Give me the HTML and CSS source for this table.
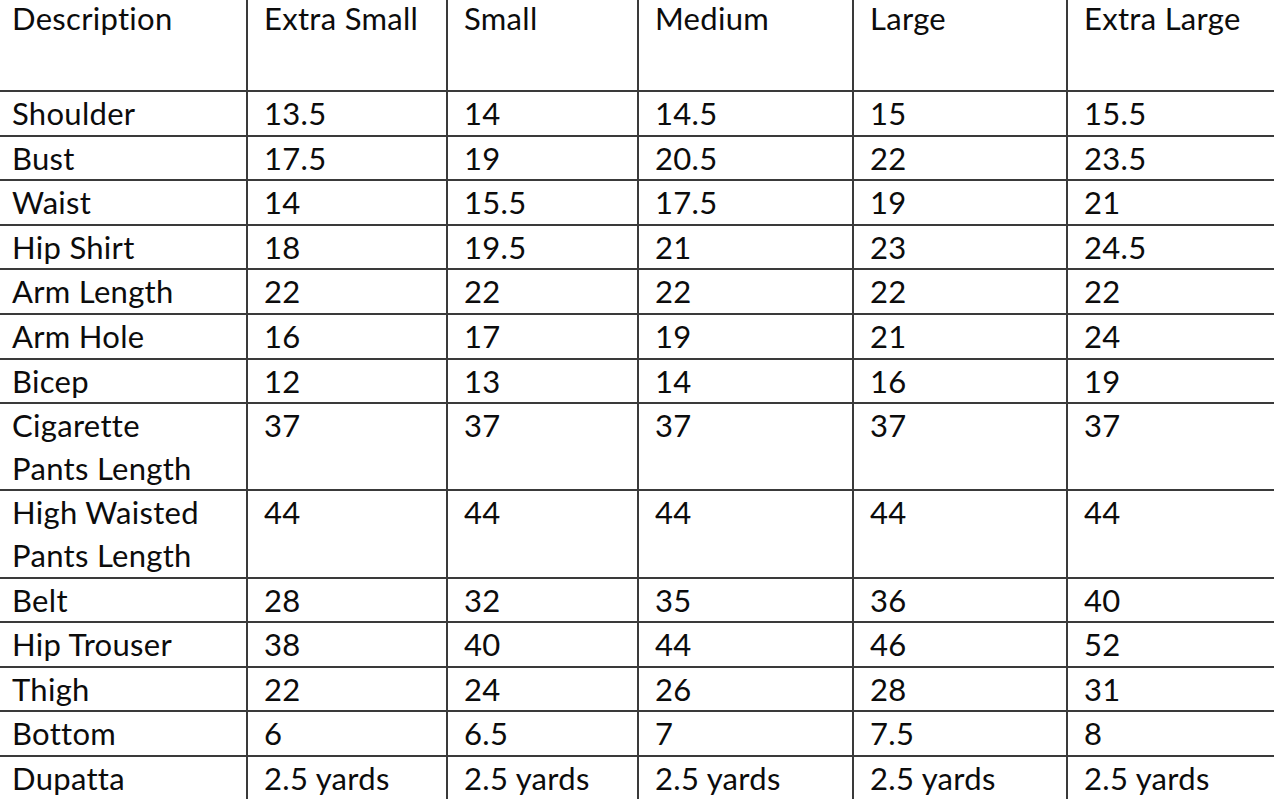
FILE: index.html
```html
<!DOCTYPE html>
<html>
<head>
<meta charset="utf-8">
<link rel="stylesheet" href="styles.css">
</head>
<body>
<table class="size-table">
  <colgroup>
    <col class="c1"><col class="c2"><col class="c3"><col class="c4"><col class="c5"><col class="c6">
  </colgroup>
  <thead>
    <tr class="head"><th>Description</th><th>Extra Small</th><th>Small</th><th>Medium</th><th>Large</th><th>Extra Large</th></tr>
  </thead>
  <tbody>
    <tr><td>Shoulder</td><td>13.5</td><td>14</td><td>14.5</td><td>15</td><td>15.5</td></tr>
    <tr><td>Bust</td><td>17.5</td><td>19</td><td>20.5</td><td>22</td><td>23.5</td></tr>
    <tr><td>Waist</td><td>14</td><td>15.5</td><td>17.5</td><td>19</td><td>21</td></tr>
    <tr><td>Hip Shirt</td><td>18</td><td>19.5</td><td>21</td><td>23</td><td>24.5</td></tr>
    <tr><td>Arm Length</td><td>22</td><td>22</td><td>22</td><td>22</td><td>22</td></tr>
    <tr><td>Arm Hole</td><td>16</td><td>17</td><td>19</td><td>21</td><td>24</td></tr>
    <tr><td>Bicep</td><td>12</td><td>13</td><td>14</td><td>16</td><td>19</td></tr>
    <tr><td>Cigarette<br>Pants Length</td><td>37</td><td>37</td><td>37</td><td>37</td><td>37</td></tr>
    <tr><td>High Waisted<br>Pants Length</td><td>44</td><td>44</td><td>44</td><td>44</td><td>44</td></tr>
    <tr><td>Belt</td><td>28</td><td>32</td><td>35</td><td>36</td><td>40</td></tr>
    <tr><td>Hip Trouser</td><td>38</td><td>40</td><td>44</td><td>46</td><td>52</td></tr>
    <tr><td>Thigh</td><td>22</td><td>24</td><td>26</td><td>28</td><td>31</td></tr>
    <tr><td>Bottom</td><td>6</td><td>6.5</td><td>7</td><td>7.5</td><td>8</td></tr>
    <tr><td>Dupatta</td><td>2.5 yards</td><td>2.5 yards</td><td>2.5 yards</td><td>2.5 yards</td><td>2.5 yards</td></tr>
  </tbody>
</table>
</body>
</html>
```
FILE: styles.css
```css
html, body {
  margin: 0;
  padding: 0;
  background: #fff;
  overflow: hidden;
}
body {
  font-family: Lato, "Liberation Sans", sans-serif;
  color: #0c0c0c;
}
.size-table {
  border-collapse: collapse;
  table-layout: fixed;
  width: 1286px;
  margin: -2px 0 0 -6px;
  font-size: 31px;
  line-height: 42.6px;
  letter-spacing: 0.3px;
}
.c1 { width: 252px; }
.c2 { width: 200px; }
.c3 { width: 191px; }
.c4 { width: 215px; }
.c5 { width: 214px; }
.c6 { width: 214px; }
.size-table th,
.size-table td {
  border: 2px solid #3a3a3a;
  padding: 0 0 0 16px;
  text-align: left;
  vertical-align: top;
  font-weight: normal;
  white-space: nowrap;
}
.size-table tr.head th {
  height: 90px;
  line-height: 37px;
  padding-top: 0;
}
```
